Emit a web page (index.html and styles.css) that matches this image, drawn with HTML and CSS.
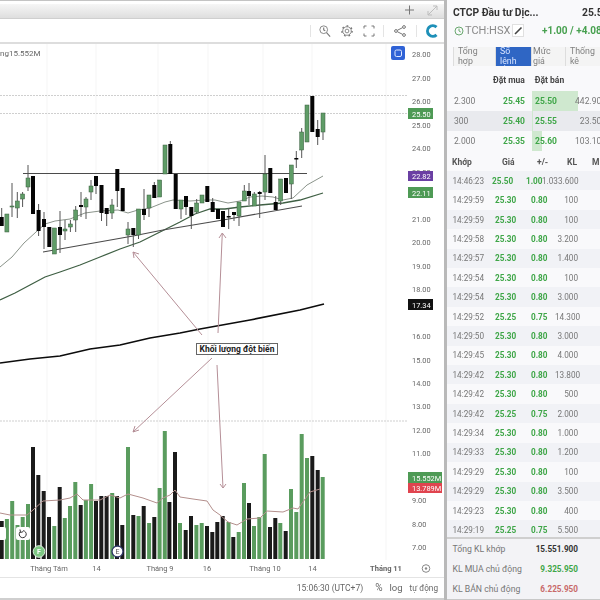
FILE: index.html
```html
<!DOCTYPE html>
<html lang="vi">
<head>
<meta charset="utf-8">
<title>TCH</title>
<link rel="stylesheet" href="styles.css">
</head>
<body>
<div class="app">
  <section class="left">
    <div class="strip">
      <svg class="strip-icons" width="40" height="14" viewBox="0 0 40 14"><path class="ic" d="M4 7h9M8.500 2.500v9"/><path class="ic-light" d="M27 12l9-9M27 8v4h4M32 3h4v4"/></svg>
    </div>
    <div class="tools">
      <span class="sep"></span>
      <svg class="tool tool-first" width="12" height="12" viewBox="0 0 14 14"><circle class="ic" cx="5.500" cy="5.500" r="4.500"/><path class="ic ic-b" d="M8.800 8.800l4.200 4.700M5.500 3v2.800l1.800 1"/></svg>
      <svg class="tool" width="12" height="12" viewBox="0 0 14 14"><circle class="ic" cx="7" cy="7" r="2.200"/><circle class="ic" cx="7" cy="7" r="5"/><circle class="gear-teeth" cx="7" cy="7" r="6"/></svg>
      <svg class="tool" width="12" height="12" viewBox="0 0 12 12"><path class="ic" d="M1 3.500V1h2.500M8.500 1H11v2.500M11 8.500V11H8.500M3.500 11H1V8.500"/></svg>
      <span class="sep sep-b"></span>
      <svg class="tool tool-share" width="12" height="12" viewBox="0 0 12 12"><circle class="ic" cx="10" cy="2" r="1.400"/><circle class="ic" cx="2" cy="6" r="1.400"/><circle class="ic" cx="10" cy="10" r="1.400"/><path class="ic" d="M3.300 5.300l5.400-2.700M3.300 6.700l5.400 2.700"/></svg>
      <span class="sep sep-c"></span>
      <svg class="tool-logo" width="13" height="14" viewBox="0 0 13 14"><path class="logo" d="M11.500 3.200A5.300 5.300 0 1 0 11.500 10.800"/></svg>
    </div>
    <div class="chart">
      <svg class="plot" width="444" height="533" viewBox="0 44 444 533">
        <path class="grid" d="M47 44V560M96 44V560M158 44V560M208 44V560M263 44V560M312 44V560M386 44V560"/>
        <path class="dots" d="M0 95.500H408M0 113.500H408M0 421H408"/>

        <path class="vol-g" d="M6.900 519V559M12.200 501V559M17.500 525V559M22.700 517V559M28 504V559M54.300 526V559M64.800 518V559M70 506V559M75.300 482V559M85.900 500V559M91.100 484V559M112.200 493V559M128 447V559M138.500 516V559M149.100 523V559M159.600 488V559M164.800 431V559M180 523V559M196.400 525V559M201.700 523V559M228.500 522V559M238.700 532V559M244 483V559M254 526V559M259.300 517V559M264.700 454V559M280.300 523V559M291 489V559M296.300 512V559M301.700 434V559M307 458V559M322.700 477V559"/>
        <path class="vol-k" d="M1.700 521V559M33 447V559M38.300 475V559M43.700 491V559M49 517V559M59.700 487V559M80.700 505V559M96 501V559M101.300 496V559M106.600 496V559M117 496V559M122.300 525V559M133.300 515V559M143.700 506V559M154.300 517V559M169.400 502V559M175 452V559M185.700 530V559M191 516V559M207 526V559M212.300 532V559M217.300 522V559M222.700 516V559M233.300 537V559M249 503V559M270 527V559M275.300 518V559M285.700 531V559M312.300 456V559M317.700 470V559"/>
        <path class="ma-vol" d="M0 513L10 515L27 515L33 510L43 501L60 500L70 498L77 494L83 500L100 500L110 495L120 498L128 494L143 498L157 503L163 498L170 495L175 490L180 497L193 499L207 501L213 510L220 515L228 522L237 525L247 519L260 518L267 511L283 512L293 508L298 509L310 492L320 489"/>

        <path class="trend" d="M23 173.500H307"/>
        <path class="ma-thin" d="M0 267L12 257L24 243L36 232L45 224L55 221L70 219L85 213L100 211L118 210L128 213L138 210L150 208L165 202L173 200L190 201L205 200L215 200L228 203L240 201L250 197L262 196L273 197L283 200L293 198L307 185L323 176"/>
        <path class="ma-mid" d="M0 300L15 293L30 285L45 277L60 272L80 265L100 257L120 249L140 242L160 232L180 222L195 214L210 209L225 209L240 207L260 205L283 203L300 200L323 193"/>
        <path class="trend" d="M43 252L133 236L163 230L223 220L302 206"/>
        <path class="ma-black" d="M0 363L30 359L60 356L90 349L120 345L150 338L180 333L200 329L250 320L300 310L324 304"/>

        <path class="wick" d="M1.700 208V217M12 183V217M17.300 192V218M22.600 192V207M28 165V191M38.600 204V236M44 212V249M60 211V253M65 220V240M70.400 220V232M75.700 206V232M81 192V217M86 197V219M91 180V200M96 176V194M101.500 185V221M106.700 208V226M112 199V219M117.300 169V207M128 222V244M133.300 228V247M138.500 209V239M144 189V220M149 195V217M154.300 182V198M170.300 141V174M181 200V219M186 196V215M191.300 207V229M196.700 199V213M212.700 198V212M228.700 208V229M234 212V221M239 202V226M244.300 185V201M249 183V205M254.300 192V206M259.700 191V218M265 155V200M275.700 196V210M280.700 179V205M291.300 165V199M296.300 151V168M301.700 128V158M317.700 120V145M323 113V140"/>
        <g class="body-g">
          <rect x="4.900" y="214" width="4" height="18"/><rect x="10" y="206" width="4" height="1"/><rect x="15.300" y="201" width="4" height="7"/><rect x="20.600" y="194" width="4" height="5"/><rect x="26" y="178" width="4" height="9"/><rect x="52.400" y="228" width="4" height="26"/><rect x="63" y="229" width="4" height="2"/><rect x="68.400" y="224" width="4" height="3"/><rect x="73.700" y="210" width="4" height="10"/><rect x="84" y="199" width="4" height="8"/><rect x="89" y="186" width="4" height="6"/><rect x="110" y="205" width="4" height="8"/><rect x="126" y="229" width="4" height="6"/><rect x="136.500" y="209" width="4" height="26"/><rect x="147" y="195" width="4" height="13"/><rect x="157.700" y="180" width="4" height="17"/><rect x="163" y="145" width="4" height="29"/><rect x="179" y="200" width="4" height="9"/><rect x="194.700" y="203" width="4" height="9"/><rect x="200" y="195" width="4" height="8"/><rect x="237" y="202" width="4" height="14"/><rect x="242.300" y="191" width="4" height="10"/><rect x="252.300" y="194" width="4" height="12"/><rect x="263" y="174" width="4" height="18"/><rect x="278.700" y="179" width="4" height="22"/><rect x="289.300" y="165" width="4" height="19"/><rect x="299.700" y="132" width="4" height="18"/><rect x="305" y="105" width="4" height="37"/><rect x="321" y="113" width="4" height="19"/>
        </g>
        <g class="body-k">
          <rect x="-.300" y="217" width="4" height="9"/><rect x="31" y="176" width="4" height="38"/><rect x="36.600" y="210" width="4" height="21"/><rect x="42" y="219" width="4" height="8"/><rect x="47.300" y="227" width="4" height="20"/><rect x="58" y="227" width="4" height="8"/><rect x="79" y="205" width="4" height="2"/><rect x="94" y="176" width="4" height="10"/><rect x="99.500" y="185" width="4" height="28"/><rect x="104.700" y="208" width="4" height="6"/><rect x="115.300" y="169" width="4" height="22"/><rect x="120.700" y="188" width="4" height="23"/><rect x="131.300" y="228" width="4" height="7"/><rect x="142" y="209" width="4" height="6"/><rect x="152.300" y="185" width="4" height="13"/><rect x="168.300" y="144" width="4" height="30"/><rect x="173.700" y="174" width="4" height="35"/><rect x="184" y="196" width="4" height="11"/><rect x="189.300" y="207" width="4" height="9"/><rect x="205.300" y="186" width="4" height="16"/><rect x="210.700" y="202" width="4" height="10"/><rect x="216" y="209" width="4" height="10"/><rect x="221" y="211" width="4" height="16"/><rect x="226.700" y="216" width="4" height="1.500"/><rect x="232" y="212" width="4" height="3"/><rect x="247" y="191" width="4" height="5"/><rect x="257.700" y="192" width="4" height="2"/><rect x="268.300" y="168" width="4" height="25"/><rect x="273.700" y="202" width="4" height="8"/><rect x="284" y="178" width="4" height="15"/><rect x="294.300" y="158" width="4" height="1.500"/><rect x="310.300" y="96" width="4" height="36"/><rect x="315.700" y="129" width="4" height="8"/>
        </g>

        <path class="arrow" d="M202 335L133 252M133 252L134 258M133 252L139 254M218 333L222.300 233M222.300 233L219 238M222.300 233L226 238M212 358L133 432M133 432L139 430M133 432L135 426M217 365L223 488M223 488L220 484M223 488L226 484"/>

        <g class="axis">
          <text x="412" y="57">28.00</text><text x="412" y="80.500">27.00</text><text x="412" y="104">26.00</text><text x="412" y="127.500">25.00</text><text x="412" y="151">24.00</text><text x="412" y="174.500">23.00</text><text x="412" y="221.500">21.00</text><text x="412" y="245">20.00</text><text x="412" y="268.500">19.00</text><text x="412" y="292">18.00</text><text x="412" y="339">16.00</text><text x="412" y="362.500">15.00</text><text x="412" y="386">14.00</text><text x="412" y="409">13.00</text><text x="412" y="432.500">12.00</text><text x="412" y="456">11.00</text><text x="412" y="503">9.00</text><text x="412" y="526.500">8.00</text><text x="412" y="550">7.00</text>
        </g>
        <rect class="tag-g" x="408" y="108" width="25" height="11"/><text class="tag-t" x="412" y="116.500">25.50</text>
        <rect class="tag-p" x="408" y="171" width="25" height="10"/><text class="tag-t" x="412" y="179">22.82</text>
        <rect class="tag-g" x="408" y="187" width="25" height="11"/><text class="tag-t" x="412" y="195.500">22.11</text>
        <rect class="tag-k" x="408" y="299" width="25" height="11"/><text class="tag-t" x="412" y="307.500">17.34</text>
        <rect class="tag-g" x="408" y="472" width="34" height="11"/><text class="tag-t" x="412" y="480.500">15.552M</text>
        <rect class="tag-r" x="408" y="483" width="34" height="10"/><text class="tag-t" x="412" y="491">13.789M</text>

        <rect class="blue-btn" x="391" y="46" width="14" height="14" rx="2"/>
        <rect class="blue-in" x="395" y="50" width="6.500" height="6.500" rx="1.500"/>

        <text class="legend" x="0" y="56">ng15.552M</text>

        <g class="time">
          <text x="49" y="571">Tháng Tám</text><text x="96.500" y="571">14</text><text x="160" y="571">Tháng 9</text><text x="207" y="571">16</text><text x="265" y="571">Tháng 10</text><text x="312.500" y="571">14</text><text class="time-b" x="386" y="571">Tháng 11</text>
        </g>
        <circle class="ring" cx="426" cy="568.500" r="3.800"/><circle class="dot" cx="426" cy="568.500" r="1.200"/>

        <rect class="float-btn" x="-8" y="527" width="14" height="13" rx="2"/>
        <rect class="float-btn" x="16" y="527" width="14" height="13" rx="2"/>
        <path class="reload" d="M20 532a3.500 3.500 0 1 0 3-1.300M20 529.500l.5 3 2.500-.8"/>

        <circle class="ev-g" cx="39" cy="551.500" r="5.800"/><text class="ev-t" x="39" y="554">F</text>
        <circle class="ev-w" cx="117.500" cy="551.500" r="5.500"/><text class="ev-t2" x="117.500" y="554">E</text>
      </svg>
      <div class="callout">Khối lượng đột biến</div>
    </div>
    <div class="status">
      <span class="clock">15:06:30 (UTC+7)</span>
      <span class="pct">%</span>
      <span class="log">log</span>
      <span>tự động</span>
    </div>
  </section>

  <aside class="right">
    <div class="title-row"><b class="name">CTCP Đầu tư Dịc...</b><b class="last">25.50</b></div>
    <div class="ticker-row">
      <svg width="10" height="10" viewBox="0 0 10 10"><circle class="clock-ic" cx="5" cy="5" r="4"/><path class="clock-ic" d="M5 2.600V5l1.800 1"/></svg>
      <span class="ticker">TCH:HSX</span>
      <span class="edit"><svg width="9" height="9" viewBox="0 0 9 9"><path class="pen" d="M1 8L7.500 1.500"/></svg></span>
      <b class="change">+1.00 / +4.08%</b>
    </div>
    <div class="tabs">
      <div class="tab">Tổng<br>hợp</div>
      <div class="tab active">Sổ<br>lệnh</div>
      <div class="tab tab-tight">Mức<br>giá</div>
      <div class="tab">Thống<br>kê</div>
    </div>
    <div class="ob-head"><b>Đặt mua</b><b>Đặt bán</b></div>
    <div class="ob-row"><span>2.300</span><b class="up buy">25.45</b><div class="sell"><i class="bar" style="width:46px"></i><b class="up">25.50</b><span>442.900</span></div></div>
    <div class="ob-row alt"><span>300</span><b class="up buy">25.40</b><div class="sell"><i class="bar" style="width:1px"></i><b class="up">25.55</b><span>23.500</span></div></div>
    <div class="ob-row"><span>2.000</span><b class="up buy">25.35</b><div class="sell"><i class="bar" style="width:10px"></i><b class="up">25.60</b><span>103.100</span></div></div>
    <div class="tr-head"><b>Khớp</b><b class="c-price">Giá</b><b>+/-</b><b>KL</b><b>M</b></div>
    <div class="trades">
      <div class="tr tr-first"><span>14:46:23</span><b class="up">25.50</b><b class="up">1.00</b><span class="vol">1.033.600</span></div>
      <div class="tr"><span>14:29:59</span><b class="up">25.30</b><b class="up">0.80</b><span class="vol">100</span></div>
      <div class="tr"><span>14:29:59</span><b class="up">25.30</b><b class="up">0.80</b><span class="vol">100</span></div>
      <div class="tr"><span>14:29:58</span><b class="up">25.30</b><b class="up">0.80</b><span class="vol">3.200</span></div>
      <div class="tr"><span>14:29:57</span><b class="up">25.30</b><b class="up">0.80</b><span class="vol">1.400</span></div>
      <div class="tr"><span>14:29:54</span><b class="up">25.30</b><b class="up">0.80</b><span class="vol">100</span></div>
      <div class="tr"><span>14:29:54</span><b class="up">25.30</b><b class="up">0.80</b><span class="vol">3.000</span></div>
      <div class="tr"><span>14:29:52</span><b class="up">25.25</b><b class="up">0.75</b><span class="vol">14.300</span></div>
      <div class="tr"><span>14:29:50</span><b class="up">25.30</b><b class="up">0.80</b><span class="vol">3.000</span></div>
      <div class="tr"><span>14:29:45</span><b class="up">25.30</b><b class="up">0.80</b><span class="vol">4.000</span></div>
      <div class="tr"><span>14:29:42</span><b class="up">25.30</b><b class="up">0.80</b><span class="vol">13.800</span></div>
      <div class="tr"><span>14:29:42</span><b class="up">25.30</b><b class="up">0.80</b><span class="vol">500</span></div>
      <div class="tr"><span>14:29:42</span><b class="up">25.25</b><b class="up">0.75</b><span class="vol">2.000</span></div>
      <div class="tr"><span>14:29:34</span><b class="up">25.30</b><b class="up">0.80</b><span class="vol">1.000</span></div>
      <div class="tr"><span>14:29:33</span><b class="up">25.30</b><b class="up">0.80</b><span class="vol">1.200</span></div>
      <div class="tr"><span>14:29:29</span><b class="up">25.30</b><b class="up">0.80</b><span class="vol">100</span></div>
      <div class="tr"><span>14:29:29</span><b class="up">25.30</b><b class="up">0.80</b><span class="vol">3.500</span></div>
      <div class="tr"><span>14:29:23</span><b class="up">25.30</b><b class="up">0.80</b><span class="vol">400</span></div>
      <div class="tr"><span>14:29:19</span><b class="up">25.25</b><b class="up">0.75</b><span class="vol">5.500</span></div>
    </div>
    <div class="summary">
      <div class="sum"><span>Tổng KL khớp</span><b class="total">15.551.900</b></div>
      <div class="sum"><span>KL MUA chủ động</span><b class="up">9.325.950</b></div>
      <div class="sum"><span>KL BÁN chủ động</span><b class="down">6.225.950</b></div>
    </div>
  </aside>
</div>
</body>
</html>
```
FILE: styles.css
```css
* { box-sizing: border-box; }
html, body { margin: 0; padding: 0; }
body { width: 600px; height: 600px; overflow: hidden; background: #fff; font-family: Roboto, "Liberation Sans", sans-serif; color: #555; }
.app { display: flex; width: 600px; height: 600px; filter: blur(.35px); }

.left { width: 444px; height: 600px; display: flex; flex-direction: column; border-top: 1px solid #c4c4c4; }
.strip { height: 15px; flex: none; margin-top: 3px; display: flex; justify-content: flex-end; align-items: center; padding: 0 3px 2px 0; background: linear-gradient(#f6f6f6, #dedede); border-bottom: 1px solid #cfcfcf; }
.tools { height: 23px; flex: none; display: flex; align-items: center; padding-left: 310px; }
.sep { width: 1px; height: 12px; background: #e4e4e4; flex: none; }
.sep-b { margin-left: 8px; }
.sep-c { margin-left: 10px; }
.tool { margin-left: 10px; flex: none; }
.tool-first { margin-left: 8px; }
.tool-logo { margin-left: 8px; flex: none; }
.ic { fill: none; stroke: #777; stroke-width: 1; }
.ic-b { stroke-width: 1.300; }
.gear-teeth { fill: none; stroke: #777; stroke-width: 1.600; stroke-dasharray: 2 3.400; }
.ic-light { fill: none; stroke: #bdbdbd; stroke-width: 1; }
.logo { fill: none; stroke: #1e90b8; stroke-width: 3; }

.chart { position: relative; height: 535px; flex: none; border-top: 2px solid #ddd; }
.plot { position: absolute; left: 0; top: 0; display: block; }
.grid { fill: none; stroke: #f5f5f5; stroke-width: 1; }
.dots { fill: none; stroke: #cfcfcf; stroke-width: 1; stroke-dasharray: 2 1; }
.vol-g { fill: none; stroke: #5a9c5e; stroke-width: 4; }
.vol-k { fill: none; stroke: #1a1a1a; stroke-width: 4; }
.ma-vol { fill: none; stroke: #b38f8c; stroke-width: 1; }
.trend { fill: none; stroke: #4b4b4b; stroke-width: 1.200; }
.ma-thin { fill: none; stroke: #8a938a; stroke-width: 1; }
.ma-mid { fill: none; stroke: #3f5f44; stroke-width: 1.300; }
.ma-black { fill: none; stroke: #0c0c0c; stroke-width: 1.700; }
.wick { fill: none; stroke: #555; stroke-width: 1; }
.body-g { fill: #5f9c67; stroke: #3d5f42; stroke-width: .5; }
.body-k { fill: #050505; }
.arrow { fill: none; stroke: #b58f97; stroke-width: 1; }

.axis text { font-size: 7.400px; fill: #666; }
.tag-g { fill: #4e9a55; }
.tag-p { fill: #6a3fa3; }
.tag-k { fill: #111; }
.tag-r { fill: #e0444f; }
.tag-t { font-size: 7.400px; fill: #fff; }
.blue-btn { fill: #2f62d6; }
.blue-in { fill: none; stroke: #dfe8ff; stroke-width: 1; }
.legend { font-size: 8px; fill: #666; }
.time text { font-size: 7.500px; fill: #666; text-anchor: middle; }
.time .time-b { font-weight: 700; }
.ring { fill: none; stroke: #888; stroke-width: 1; }
.dot { fill: #888; }
.float-btn { fill: #fff; }
.reload { fill: none; stroke: #333; stroke-width: 1; }
.ev-g { fill: #7ec884; stroke: #dff0e0; stroke-width: 1; }
.ev-t { font-size: 7px; fill: #fff; text-anchor: middle; font-weight: 700; }
.ev-w { fill: #fff; stroke: #2c3566; stroke-width: 1.300; }
.ev-t2 { font-size: 7px; fill: #555; text-anchor: middle; }

.callout { position: absolute; left: 196px; top: 299px; width: 82px; height: 12px; border: 1px solid #666; background: #fff; color: #222; font-size: 8.500px; font-weight: 700; line-height: 10px; text-align: center; white-space: nowrap; }

.status { flex: 1; display: flex; justify-content: flex-end; align-items: center; gap: 7px; padding: 0 6px 1px 0; border-top: 1px solid #e4e4e4; border-bottom: 2px solid #cfcfcf; font-size: 8.200px; color: #666; }
.clock { margin-right: 5px; font-size: 8.500px; }
.pct { font-size: 10px; }
.log { font-size: 9.500px; }

.right { flex: 1; min-width: 0; height: 600px; overflow: hidden; border-left: 3px solid #b9b9b9; background: #f9f9fb; display: flex; flex-direction: column; }
.title-row { height: 22px; flex: none; padding: 3px 0 0 6px; display: flex; align-items: center; white-space: nowrap; font-size: 10.300px; color: #333; }
.name { width: 129px; flex: none; }
.last { flex: none; }
.ticker-row { height: 17px; flex: none; display: flex; align-items: center; padding-left: 7px; white-space: nowrap; }
.ticker-row svg { flex: none; }
.clock-ic { fill: none; stroke: #6aa86f; stroke-width: 1; }
.ticker { font-size: 11px; color: #8a8a8a; margin-left: 1px; width: 47px; flex: none; }
.edit { width: 12px; height: 13px; border: 1px solid #e0e0e0; background: #fff; display: flex; align-items: center; justify-content: center; flex: none; }
.pen { fill: none; stroke: #444; stroke-width: 1.600; }
.change { margin-left: 18px; font-size: 10px; color: #47a04f; flex: none; }

.tabs { display: grid; flex: none; grid-template-columns: 42px 36px 34px 41px; margin: 8px 0 0 6px; height: 18px; width: 160px; }
.tab { padding: 0 0 0 4px; font-size: 8.800px; line-height: 9.500px; color: #808080; background: #f4f4f4; border-left: 1px solid #ddd; }
.tab-tight { padding-left: 1px; }
.tab.active { background: #2f66c4; color: #d8e4ff; }

.ob-head { height: 26px; flex: none; display: flex; align-items: center; padding: 4px 0 0 46px; gap: 10px; font-size: 8.500px; color: #444; }
.ob-row { height: 20px; flex: none; display: grid; grid-template-columns: 78px 74px; align-items: center; font-size: 8.500px; color: #777; padding-left: 7px; white-space: nowrap; }
.ob-row.alt { background: #e9eaee; }
.buy { width: 71px; text-align: right; grid-column: 1; grid-row: 1; }
.ob-row > span { grid-column: 1; grid-row: 1; }
.sell { grid-column: 2; grid-row: 1; position: relative; height: 20px; display: flex; align-items: center; justify-content: space-between; padding-left: 3px; }
.bar { position: absolute; left: 0; top: 0; bottom: 0; background: #cfe8cf; }
.sell b, .sell span { position: relative; }
.up { color: #3fa648; }
.down { color: #c86a6a; }

.tr-head { height: 20px; flex: none; font-size: 8.500px; color: #555; display: grid; grid-template-columns: 45px 40px 30px 25px 20px; align-items: center; padding: 2px 0 0 5px; width: 170px; }
.c-price { padding-left: 5px; }
.trades { flex: 1; min-height: 0; overflow: hidden; }
.tr { height: 19.420px; display: grid; grid-template-columns: 42.500px 36px 24px 1fr; align-items: center; padding: 0 22px 0 5.500px; font-size: 8.200px; color: #777; white-space: nowrap; }
.tr-first { grid-template-columns: 39.500px 34px 16px 1fr; }
.tr:nth-child(odd) { background: #f1f2f6; }
.vol { text-align: right; }
.summary { height: 63px; flex: none; border-top: 2px solid #cfcfcf; background: #f3f3f6; border-bottom: 1px solid #c8c8c8; }
.sum { height: 20px; display: flex; justify-content: space-between; align-items: center; padding: 0 22px 0 5.500px; font-size: 8.700px; color: #777; }
.sum b { font-size: 8.200px; }
.total { color: #333; }
```
